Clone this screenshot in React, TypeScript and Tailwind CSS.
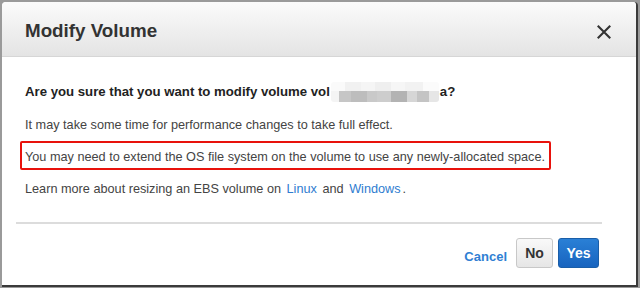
import React from "react";

export default function App() {
  const font = { fontFamily: '"Liberation Sans", Arial, sans-serif' };
  return (
    <div className="w-[640px] h-[288px] bg-[#9a9a9a] overflow-hidden pl-[2px] pt-[2px]" style={font}>
      <div className="w-[636px] h-[285px] bg-white rounded-t-[4px] border-r-2 border-b-2 border-[#3a3a3a] flex flex-col">
        {/* Header */}
        <div className="h-[55px] shrink-0 rounded-t-[4px] bg-gradient-to-b from-[#fbfbfb] to-[#e4e4e4] border-b border-[#d6d6d6] flex items-center justify-between pl-[23px] pr-[25px] pt-[4px]">
          <span className="text-[18.8px] font-bold text-[#333] leading-none">Modify Volume</span>
          <svg width="14" height="14" viewBox="0 0 14 14" className="mt-[1px]">
            <path d="M1.5 1.5 L12.5 12.5 M12.5 1.5 L1.5 12.5" stroke="#333" strokeWidth="2.1" strokeLinecap="square" />
          </svg>
        </div>
        {/* Body */}
        <div className="pl-[23px] pt-[26px] text-[12.7px] text-[#444]">
          <p className="h-[18px] leading-[18px] text-[13.2px] font-bold text-[#222] flex items-center whitespace-nowrap">
            <span>Are you sure that you want to modify volume vol</span>
            <span className="inline-flex flex-col w-[108px] h-[20px] mx-[1px] overflow-hidden rounded-[3px]">
              <span className="flex h-[9px]">
                <span className="w-[14px] bg-[#fafafa]" />
                <span className="w-[16px] bg-[#f1f1f1]" />
                <span className="w-[14px] bg-[#f5f5f5]" />
                <span className="w-[16px] bg-[#efefef]" />
                <span className="w-[14px] bg-[#f6f6f6]" />
                <span className="w-[18px] bg-[#f2f2f2]" />
                <span className="w-[16px] bg-[#fbfbfb]" />
              </span>
              <span className="flex h-[11px]">
                <span className="w-[8px] bg-[#f4f4f4]" />
                <span className="w-[12px] bg-[#c6c6c6]" />
                <span className="w-[16px] bg-[#bdbdbd]" />
                <span className="w-[10px] bg-[#c9c9c9]" />
                <span className="w-[14px] bg-[#cdcdcd]" />
                <span className="w-[16px] bg-[#b3b3b3]" />
                <span className="w-[10px] bg-[#d6d6d6]" />
                <span className="w-[12px] bg-[#c4c4c4]" />
                <span className="w-[10px] bg-[#e6e6e6]" />
              </span>
            </span>
            <span>a?</span>
          </p>
          <p className="h-[18px] leading-[18px] mt-[15px] whitespace-nowrap">
            It may take some time for performance changes to take full effect.
          </p>
          <div className="mt-[7px] -ml-[5px] w-[531px] h-[29px] border-2 border-[#e8120c] rounded-[2px] pl-[3px] pt-[5px]">
            <p className="h-[18px] leading-[18px] whitespace-nowrap">
              You may need to extend the OS file system on the volume to use any newly-allocated space.
            </p>
          </div>
          <p className="h-[18px] leading-[18px] mt-[10px] whitespace-nowrap">
            Learn more about resizing an EBS volume on <span className="text-[#2f7cd0] px-[2px]">Linux</span> and{" "}
            <span className="text-[#2f7cd0] px-[2px]">Windows</span>.
          </p>
        </div>
        {/* Divider */}
        <div className="ml-[14px] mt-[24px] w-[586px] h-[2px] bg-[#dcdcdc]" />
        {/* Footer */}
        <div className="flex items-center justify-end pr-[37px] mt-[14px]">
          <span className="text-[13px] font-bold text-[#2f7fd3] mr-[9px] mt-[7px]">Cancel</span>
          <button className="w-[37px] h-[30px] rounded-[3px] border border-[#c8c8c8] bg-gradient-to-b from-[#f9f9f9] to-[#e6e6e6] text-[14px] font-bold text-[#333]">
            No
          </button>
          <button className="ml-[5px] w-[41px] h-[30px] rounded-[3px] border border-[#1a5ea8] bg-gradient-to-b from-[#2a80d6] to-[#1864bf] text-[14px] font-bold text-white">
            Yes
          </button>
        </div>
      </div>
    </div>
  );
}
